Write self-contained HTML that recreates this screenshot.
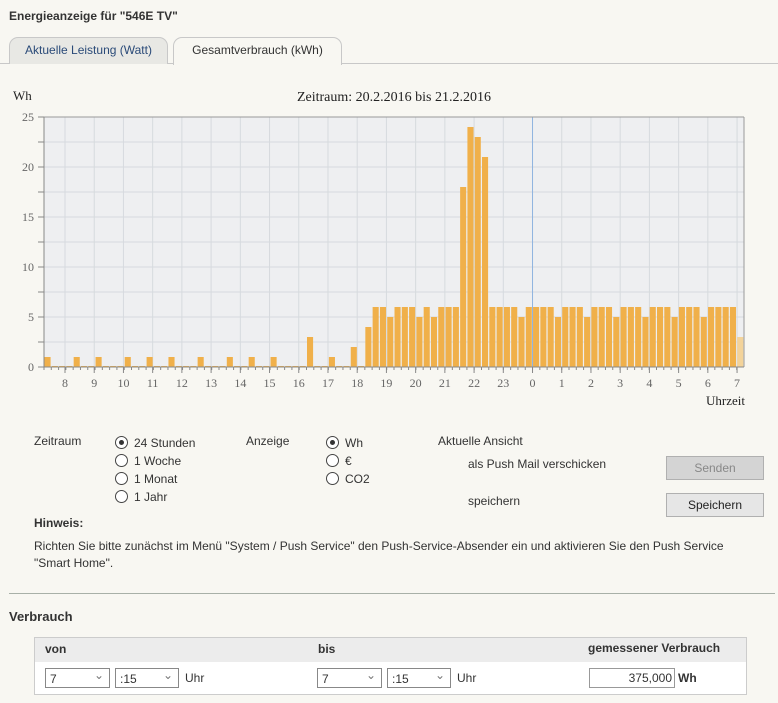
<!DOCTYPE html>
<html><head><meta charset="utf-8"><style>
body{margin:0;background:#f8f7f2;font-family:"Liberation Sans",Arial,sans-serif;color:#333;width:778px;height:703px;overflow:hidden;position:relative}
.a{position:absolute;white-space:nowrap}
.t{font-size:12px}
.tab{position:absolute;top:37px;height:26px;border:1px solid #c8c8c8;border-bottom:none;border-radius:9px 9px 0 0;font-size:12px;text-align:center;line-height:24px}
.rad{display:inline-block;width:11px;height:11px;border:1px solid #444;border-radius:50%;vertical-align:-2px;margin-right:6px;background:#fff;position:relative}
.rad.on:after{content:"";position:absolute;left:3px;top:3px;width:5px;height:5px;border-radius:50%;background:#333}
.btn{position:absolute;width:96px;height:22px;border:1px solid #b0b0b0;font-size:12px;text-align:center;line-height:22px}
.sel{position:absolute;top:668px;height:20px;border:1px solid #888;background:#fff;font-size:12px;line-height:20px;box-sizing:border-box;padding-left:4px}
.sel:after{content:"⌄";position:absolute;right:5px;top:-4px;color:#777;font-size:12px}
</style></head><body>
<div class="a" style="left:9px;top:9px;font-size:12px;font-weight:bold;color:#333">Energieanzeige für "546E TV"</div>
<div class="a" style="left:0;top:63px;width:778px;height:1px;background:#c8c8c8"></div>
<div class="tab" style="left:9px;width:157px;background:#e8e8e4;color:#2a4a78">Aktuelle Leistung (Watt)</div>
<div class="tab" style="left:173px;width:167px;background:#f8f7f2;height:27px">Gesamtverbrauch (kWh)</div>
<svg class="a" style="left:0;top:80px" width="778" height="330" id="ch" font-family="Liberation Serif,serif"></svg>
<div class="a t" style="left:34px;top:434px">Zeitraum</div>
<div class="a t" style="left:115px;top:434px;line-height:18px"><span class="rad on"></span>24 Stunden<br><span class="rad"></span>1 Woche<br><span class="rad"></span>1 Monat<br><span class="rad"></span>1 Jahr</div>
<div class="a t" style="left:246px;top:434px">Anzeige</div>
<div class="a t" style="left:326px;top:434px;line-height:18px"><span class="rad on"></span>Wh<br><span class="rad"></span>€<br><span class="rad"></span>CO2</div>
<div class="a t" style="left:438px;top:434px">Aktuelle Ansicht</div>
<div class="a t" style="left:468px;top:457px">als Push Mail verschicken</div>
<div class="a t" style="left:468px;top:494px">speichern</div>
<div class="btn" style="left:666px;top:456px;background:#d4d4d4;color:#888">Senden</div>
<div class="btn" style="left:666px;top:493px;background:#e6e6e6;color:#222">Speichern</div>
<div class="a t" style="left:34px;top:516px;font-weight:bold">Hinweis:</div>
<div class="a t" style="left:34px;top:538px;line-height:17px;white-space:normal;width:700px">Richten Sie bitte zunächst im Menü "System / Push Service" den Push-Service-Absender ein und aktivieren Sie den Push Service "Smart Home".</div>
<div class="a" style="left:9px;top:593px;width:766px;height:1px;background:#a8b0a8"></div>
<div class="a" style="left:9px;top:609px;font-size:13px;font-weight:bold">Verbrauch</div>
<div class="a" style="left:34px;top:637px;width:711px;height:56px;border:1px solid #ccc;background:#fff"></div>
<div class="a" style="left:35px;top:638px;width:711px;height:24px;background:#ececec"></div>
<div class="a t" style="left:45px;top:642px;font-weight:bold">von</div>
<div class="a t" style="left:318px;top:642px;font-weight:bold">bis</div>
<div class="a t" style="left:588px;top:641px;font-weight:bold">gemessener Verbrauch</div>
<div class="sel" style="left:45px;width:65px">7</div>
<div class="sel" style="left:115px;width:64px">:15</div>
<div class="a t" style="left:185px;top:671px">Uhr</div>
<div class="sel" style="left:317px;width:65px">7</div>
<div class="sel" style="left:387px;width:64px">:15</div>
<div class="a t" style="left:457px;top:671px">Uhr</div>
<div class="a t" style="left:589px;top:668px;width:86px;height:20px;border:1px solid #999;background:#fff;box-sizing:border-box;text-align:right;padding-right:2px;line-height:18px">375,000</div>
<div class="a t" style="left:678px;top:671px;font-weight:bold">Wh</div>
<script>
var s='',L=44,T=37,W=700,H=250,B=W/96,hs=29.22;
s+='<rect x="'+L+'" y="'+T+'" width="'+W+'" height="'+H+'" fill="#eeeff1"/>';
for(var k=1;k<10;k++){var y=T+H-k*25;s+='<line x1="'+L+'" x2="'+(L+W)+'" y1="'+y+'" y2="'+y+'" stroke="#d6dade"/>';s+='<line x1="'+(L-6)+'" x2="'+L+'" y1="'+y+'" y2="'+y+'" stroke="#888"/>';}
var hl=['8','9','10','11','12','13','14','15','16','17','18','19','20','21','22','23','0','1','2','3','4','5','6','7'];
for(var i=0;i<24;i++){var x=65+i*hs;s+='<line x1="'+x+'" x2="'+x+'" y1="'+T+'" y2="'+(T+H)+'" stroke="'+(hl[i]=='0'?'#8fb4e0':'#d6dade')+'"/>';
s+='<line x1="'+x+'" x2="'+x+'" y1="'+(T+H)+'" y2="'+(T+H+6)+'" stroke="#888"/>';
s+='<text x="'+x+'" y="'+(T+H+20)+'" font-size="12" fill="#666" text-anchor="middle">'+hl[i]+'</text>';}
for(var i=0;i<96;i++){var x=L+i*B;s+='<line x1="'+x+'" x2="'+x+'" y1="'+(T+H)+'" y2="'+(T+H+3)+'" stroke="#888"/>';}
var h=[];for(i=0;i<96;i++)h[i]=0.1;
[0,4,7,11,14,17,21,25,28,31,39].forEach(function(i){h[i]=1});h[36]=3;h[42]=2;
var m=[4,6,6,5,6,6,6,5,6,5,6,6,6,18,24,23,21,6,6,6,6,5,6,6,6,6,5,6,6,6,5,6,6,6,5,6,6,6,5,6,6,6,5,6,6,6,5,6,6,6,6,5,6,6];
for(i=0;i<m.length&&44+i<95;i++)h[44+i]=m[i];
for(i=0;i<96;i++){var hh=h[i]*10,c=i==95?'#f3d39a':'#f0b04a';if(i==95)hh=30;
s+='<rect x="'+(L+i*B+0.5)+'" y="'+(T+H-hh)+'" width="'+(B-1.2)+'" height="'+hh+'" fill="'+c+'"/>';}
s+='<line x1="'+L+'" x2="'+(L+W)+'" y1="'+T+'" y2="'+T+'" stroke="#999"/>';
s+='<line x1="'+(L+W)+'" x2="'+(L+W)+'" y1="'+T+'" y2="'+(T+H)+'" stroke="#999"/>';
s+='<line x1="'+L+'" x2="'+L+'" y1="'+T+'" y2="'+(T+H)+'" stroke="#888"/>';
s+='<line x1="'+L+'" x2="'+(L+W)+'" y1="'+(T+H)+'" y2="'+(T+H)+'" stroke="#888"/>';
for(k=0;k<=5;k++){var y=T+H-k*50;s+='<line x1="'+(L-6)+'" x2="'+L+'" y1="'+y+'" y2="'+y+'" stroke="#888"/><text x="'+(L-10)+'" y="'+(y+4)+'" font-size="12" fill="#666" text-anchor="end">'+(k*5)+'</text>';}
s+='<text x="13" y="20" font-size="13" fill="#222">Wh</text>';
s+='<text x="394" y="21" font-size="14" fill="#222" text-anchor="middle">Zeitraum: 20.2.2016 bis 21.2.2016</text>';
s+='<text x="745" y="325" font-size="13" fill="#222" text-anchor="end">Uhrzeit</text>';
document.getElementById('ch').innerHTML=s;
</script>
</body></html>
